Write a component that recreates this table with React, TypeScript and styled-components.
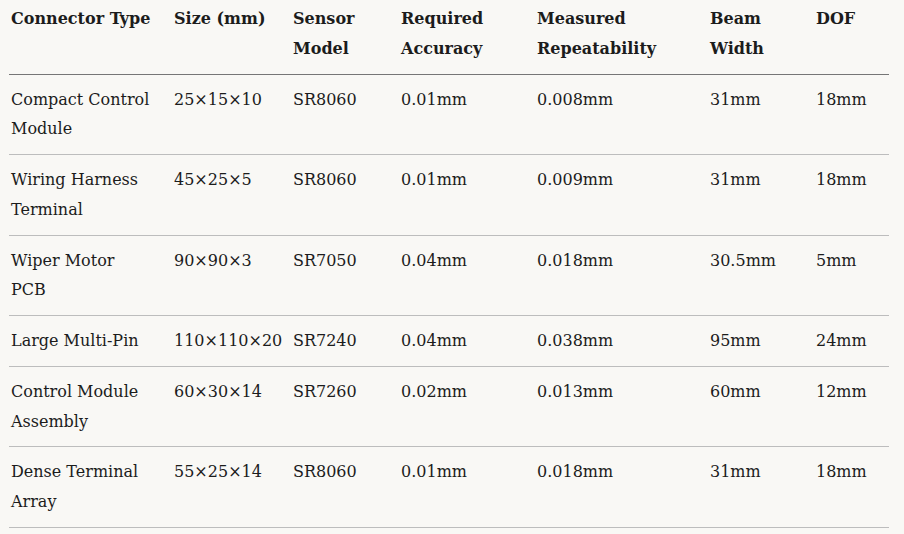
import React from "react";
import styled, { createGlobalStyle } from "styled-components";

const GlobalStyle = createGlobalStyle`
  html, body {
    margin: 0;
    padding: 0;
    background: #f9f8f5;
  }
  body {
    font-family: "DejaVu Serif", "Liberation Serif", serif;
    color: #1c1c1c;
  }
`;

const Page = styled.div`
  padding: 0 15px 0 9px;
  margin-top: -6px;
`;

const Table = styled.table`
  width: 880px;
  border-collapse: collapse;
  table-layout: fixed;
  font-size: 16px;
  line-height: 29.75px;
`;

const HeadCell = styled.th`
  text-align: left;
  vertical-align: top;
  font-weight: 700;
  padding: 10px 8px 10px 2px;
  border-bottom: 1px solid #767676;
`;

const Cell = styled.td<{ $narrow?: boolean }>`
  vertical-align: top;
  padding: 10px ${(p) => (p.$narrow ? "18px" : "8px")} 10px 2px;
  border-bottom: 1px solid #bdbdbd;
`;

type Row = {
  type: string;
  size: string;
  sensor: string;
  accuracy: string;
  repeat: string;
  beam: string;
  dof: string;
};

const columns = [
  { label: "Connector Type", width: 163 },
  { label: "Size (mm)", width: 119 },
  { label: "Sensor Model", width: 108 },
  { label: "Required Accuracy", width: 136 },
  { label: "Measured Repeatability", width: 173 },
  { label: "Beam Width", width: 106 },
  { label: "DOF", width: 75 },
];

const rows: Row[] = [
  { type: "Compact Control Module", size: "25×15×10", sensor: "SR8060", accuracy: "0.01mm", repeat: "0.008mm", beam: "31mm", dof: "18mm" },
  { type: "Wiring Harness Terminal", size: "45×25×5", sensor: "SR8060", accuracy: "0.01mm", repeat: "0.009mm", beam: "31mm", dof: "18mm" },
  { type: "Wiper Motor PCB", size: "90×90×3", sensor: "SR7050", accuracy: "0.04mm", repeat: "0.018mm", beam: "30.5mm", dof: "5mm" },
  { type: "Large Multi-Pin", size: "110×110×20", sensor: "SR7240", accuracy: "0.04mm", repeat: "0.038mm", beam: "95mm", dof: "24mm" },
  { type: "Control Module Assembly", size: "60×30×14", sensor: "SR7260", accuracy: "0.02mm", repeat: "0.013mm", beam: "60mm", dof: "12mm" },
  { type: "Dense Terminal Array", size: "55×25×14", sensor: "SR8060", accuracy: "0.01mm", repeat: "0.018mm", beam: "31mm", dof: "18mm" },
];

export default function App() {
  return (
    <>
      <GlobalStyle />
      <Page>
        <Table>
          <colgroup>
            {columns.map((c) => (
              <col key={c.label} style={{ width: c.width }} />
            ))}
          </colgroup>
          <thead>
            <tr>
              {columns.map((c) => (
                <HeadCell key={c.label}>{c.label}</HeadCell>
              ))}
            </tr>
          </thead>
          <tbody>
            {rows.map((r) => (
              <tr key={r.type}>
                <Cell $narrow>{r.type}</Cell>
                <Cell>{r.size}</Cell>
                <Cell>{r.sensor}</Cell>
                <Cell>{r.accuracy}</Cell>
                <Cell>{r.repeat}</Cell>
                <Cell>{r.beam}</Cell>
                <Cell>{r.dof}</Cell>
              </tr>
            ))}
          </tbody>
        </Table>
      </Page>
    </>
  );
}
